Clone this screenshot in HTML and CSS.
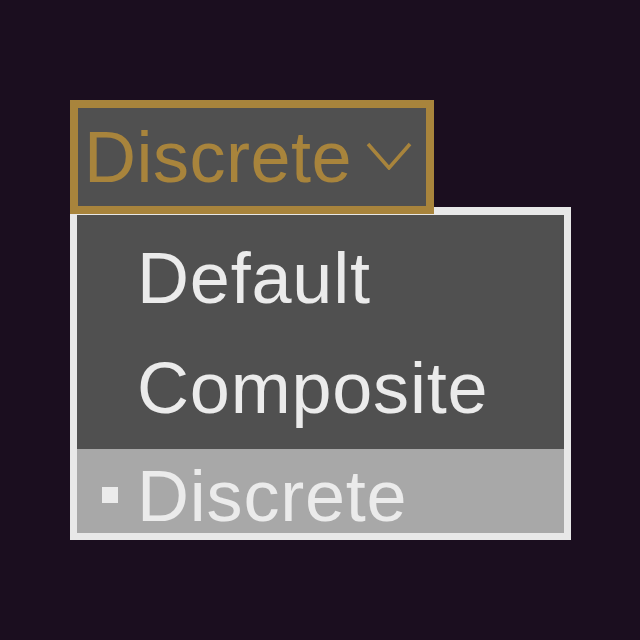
FILE: index.html
```html
<!DOCTYPE html>
<html lang="en">
<head>
    <meta charset="UTF-8">
    <meta name="viewport" content="width=device-width, initial-scale=1.0">
    <title>Mode Select</title>
    <link rel="stylesheet" href="styles.css">
</head>
<body>

    <!-- Dropdown -->
    <div class="dropdown">
        <button class="dropdown-toggle" type="button">
            <span class="dropdown-label">Discrete</span>
            <svg class="chevron" width="46" height="28" viewBox="0 0 46 28">
                <polyline points="2,2 23,26 44,2" fill="none" stroke="#a8843c" stroke-width="3.5"/>
            </svg>
        </button>
        <div class="dropdown-menu">
            <ul class="menu-list">
                <li class="menu-item">Default</li>
                <li class="menu-item spaced">Composite</li>
                <li class="menu-item selected">Discrete</li>
            </ul>
        </div>
    </div>

</body>
</html>
```

FILE: styles.css
```css
body {
    font-family: "Liberation Sans", Arial, sans-serif;
    background-color: #1b0e1f;
    margin: 0;
}
.dropdown {
    padding: 100px 0 0 70px;
    display: flex;
    flex-direction: column;
    align-items: flex-start;
}
.dropdown-toggle {
    position: relative;
    z-index: 2;
    display: flex;
    align-items: center;
    box-sizing: border-box;
    width: 364px;
    height: 114px;
    padding: 0 0 0 6px;
    background-color: #505050;
    border: 8px solid #a8843c;
    font-family: inherit;
    cursor: pointer;
}
.dropdown-label {
    font-size: 72px;
    line-height: 96px;
    letter-spacing: 0.5px;
    color: #a8843c;
}
.chevron {
    margin-left: 14px;
    margin-top: -2px;
}
.dropdown-menu {
    box-sizing: border-box;
    width: 501px;
    height: 333px;
    margin-top: -7px;
    border: 7px solid #e8e8e8;
    border-top-width: 8px;
    background-color: #505050;
    overflow: hidden;
}
.menu-list {
    list-style: none;
    margin: 0;
    padding: 8px 0 0 0;
}
.menu-item {
    padding-left: 60px;
    font-size: 72px;
    line-height: 110px;
    letter-spacing: 0.8px;
    color: #ebebeb;
    white-space: nowrap;
}
.menu-item.spaced {
    padding-bottom: 6px;
}
.menu-item.selected {
    height: 84px;
    line-height: 94px;
    background-color: #a8a8a8;
}
.menu-item.selected::before {
    content: "";
    display: inline-block;
    width: 16px;
    height: 16px;
    margin-left: -35px;
    margin-right: 19px;
    vertical-align: 18px;
    background-color: #ebebeb;
}
```
